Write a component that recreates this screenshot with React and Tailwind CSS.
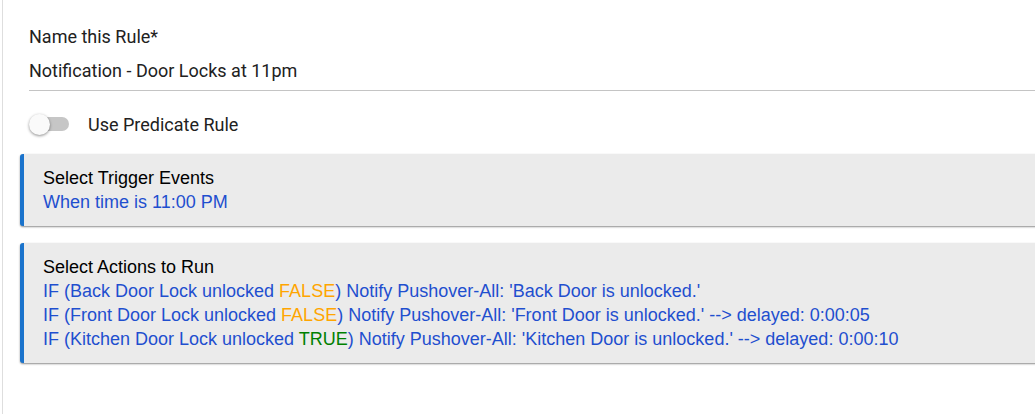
export default function App() {
  const blue = "text-[#1f4fcf]";
  return (
    <div className="w-[1035px] h-[414px] overflow-hidden bg-white pl-[2px]">
      <div className="h-full border-l border-[#dedede] flex flex-col">
        <div className="pl-[26px] pt-[25px] font-['Roboto',sans-serif] text-[18px] leading-[24px] text-[#212121]">
          <div>Name this Rule*</div>
          <div className="mt-[10px] pb-[7px] border-b border-[#c4c4c4]">Notification - Door Locks at 11pm</div>
        </div>
        <div className="mt-[23px] flex items-center pl-[25px] h-[20px] font-['Roboto',sans-serif] text-[18px] text-[#212121]">
          <div className="relative w-[46px] h-[20px] flex items-center">
            <div className="ml-[5px] w-[36px] h-[14px] rounded-full bg-[#c6c6c6]" />
            <div className="absolute left-[1px] top-0 w-[21px] h-[21px] rounded-full bg-[#fafafa] shadow-[0_1px_3px_rgba(0,0,0,0.45)]" />
          </div>
          <span className="ml-[14px]">Use Predicate Rule</span>
        </div>
        <div className="mt-[20px] ml-[17px] mr-[-10px] flex flex-col gap-[17px] font-['Liberation_Sans',Arial,sans-serif] text-[18px] leading-[24px]">
          <div className="border-l-4 border-[#1a73cc] bg-[#ebebeb] rounded-l-[3px] shadow-[0_1px_2px_rgba(0,0,0,0.45)] py-[12px] pl-[19px]">
            <div className="text-black">Select Trigger Events</div>
            <div className={blue}>When time is 11:00 PM</div>
          </div>
          <div className="border-l-4 border-[#1a73cc] bg-[#ebebeb] rounded-l-[3px] shadow-[0_1px_2px_rgba(0,0,0,0.45)] py-[12px] pl-[19px]">
            <div className="text-black">Select Actions to Run</div>
            <div className={blue}>
              IF (Back Door Lock unlocked <span className="text-[#ffa500]">FALSE</span>) Notify Pushover-All: 'Back Door is unlocked.'
            </div>
            <div className={blue}>
              IF (Front Door Lock unlocked <span className="text-[#ffa500]">FALSE</span>) Notify Pushover-All: 'Front Door is unlocked.' --&gt; delayed: 0:00:05
            </div>
            <div className={blue}>
              IF (Kitchen Door Lock unlocked <span className="text-[#008000]">TRUE</span>) Notify Pushover-All: 'Kitchen Door is unlocked.' --&gt; delayed: 0:00:10
            </div>
          </div>
        </div>
      </div>
    </div>
  );
}
